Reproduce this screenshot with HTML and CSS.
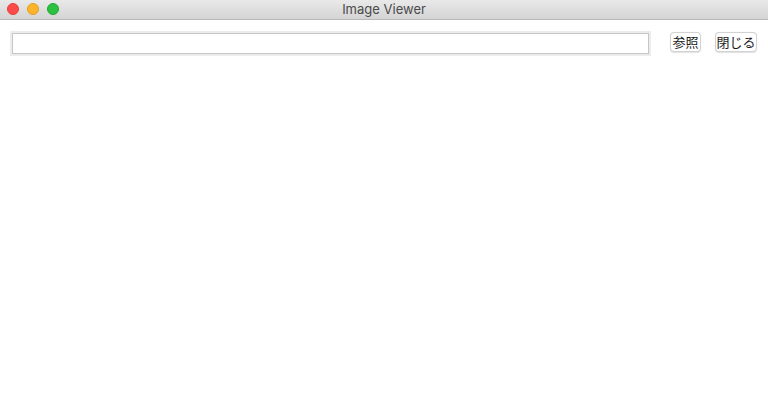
FILE: index.html
```html
<!DOCTYPE html>
<html>
<head>
<meta charset="utf-8">
<link rel="stylesheet" href="styles.css">
</head>
<body>
<div class="window">
  <div class="titlebar">
    <div class="lights">
      <span class="light red"></span>
      <span class="light yellow"></span>
      <span class="light green"></span>
    </div>
    <div class="title">Image Viewer</div>
  </div>
  <div class="toolbar">
    <div class="field-frame"><input class="field" type="text"></div>
    <button class="btn btn-browse">参照</button>
    <button class="btn btn-close">閉じる</button>
  </div>
</div>
</body>
</html>
```

FILE: styles.css
```css
html, body {
  margin: 0;
  padding: 0;
  background: #ffffff;
}
.window {
  width: 768px;
  height: 420px;
  display: flex;
  flex-direction: column;
  font-family: "Liberation Sans", "Noto Sans CJK JP", sans-serif;
}
.titlebar {
  position: relative;
  height: 19px;
  border-bottom: 1px solid #b9b9b9;
  background: linear-gradient(#e9e9e9, #d4d4d4);
  display: flex;
  align-items: center;
  justify-content: center;
}
.lights {
  position: absolute;
  left: 7px;
  top: 3px;
  display: flex;
  gap: 8px;
}
.light {
  width: 12px;
  height: 12px;
  border-radius: 50%;
  box-sizing: border-box;
}
.red { background: #fc4b4a; border: 1px solid #e1413f; }
.yellow { background: #fdb42b; border: 1px solid #e09e26; }
.green { background: #2ac23f; border: 1px solid #21a633; }
.title {
  font-family: "Inter", "Liberation Sans", sans-serif;
  font-size: 13px;
  color: #4a4a4a;
  line-height: 19px;
}
.toolbar {
  display: flex;
  align-items: flex-start;
  padding: 11px 0 0 10px;
}
.field-frame {
  width: 637px;
  height: 21px;
  border: 2px solid #ececec;
  display: flex;
}
.field {
  flex: 1;
  margin: 0;
  padding: 0;
  border: 1px solid #c6c6c6;
  outline: none;
  background: #fff;
  height: 21px;
  box-sizing: border-box;
}
.btn {
  margin: 1px 0 0 0;
  height: 20px;
  padding: 0;
  border: 1px solid #d2d2d2;
  border-radius: 4px;
  background: #fff;
  box-shadow: 0 0.5px 1px rgba(0,0,0,0.12);
  font-family: "Noto Sans CJK JP", sans-serif;
  font-size: 13px;
  line-height: 18px;
  color: #1a1a1a;
  box-sizing: border-box;
}
.btn-browse {
  width: 31px;
  margin-left: 19px;
}
.btn-close {
  width: 42px;
  margin-left: 14px;
}
```
